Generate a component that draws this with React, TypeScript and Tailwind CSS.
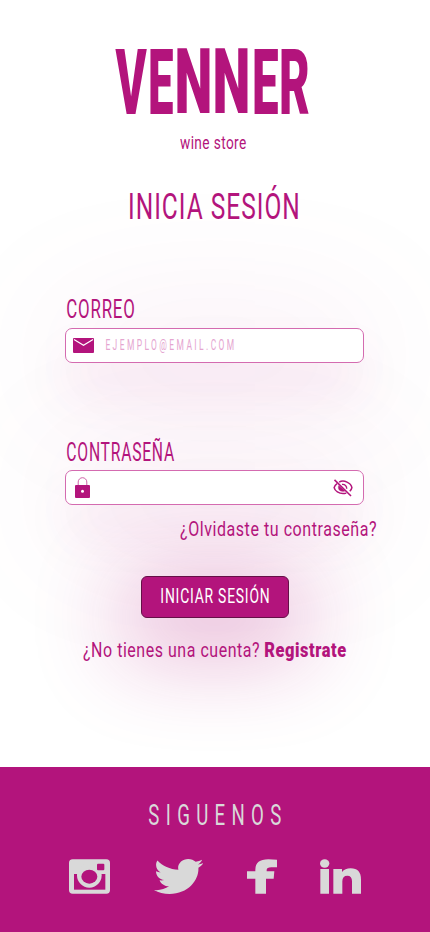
import { useLayoutEffect, useRef, useState } from "react";
import type { ReactNode } from "react";
import { FaTwitter } from "react-icons/fa";

/* Condenses a line of text so that its ink fills the width of its box. */
function Condensed({ text, className }: { text: string; className: string }) {
  const box = useRef<HTMLSpanElement>(null);
  const [fit, setFit] = useState({ scale: 1, shift: 0 });

  useLayoutEffect(() => {
    const el = box.current;
    const ctx = document.createElement("canvas").getContext("2d");
    if (!el || !ctx) return;
    const style = getComputedStyle(el);
    ctx.font = `${style.fontWeight} ${style.fontSize} ${style.fontFamily}`;
    const spacing = parseFloat(style.letterSpacing) || 0;
    const m = ctx.measureText(text);
    const ink = m.actualBoundingBoxRight + m.actualBoundingBoxLeft + spacing * (text.length - 1);
    const scale = el.clientWidth / ink;
    setFit({ scale, shift: m.actualBoundingBoxLeft * scale });
  }, [text]);

  return (
    <span ref={box} className={`block shrink-0 whitespace-nowrap leading-none ${className}`}>
      <span
        className="block w-max origin-left"
        style={{ transform: `translateX(${fit.shift}px) scaleX(${fit.scale})` }}
      >
        {text}
      </span>
    </span>
  );
}

/* The glow sits on a pseudo-element behind every control of the form. */
function Field({ children }: { children: ReactNode }) {
  return (
    <div className="relative flex h-[35px] w-[299px] items-center rounded-[7px] border border-[#d46bb0] bg-white before:absolute before:inset-0 before:-z-10 before:rounded-[7px] before:shadow-[0_28px_50px_rgba(179,20,124,0.08),0_10px_150px_10px_rgba(179,20,124,0.13)]">
      {children}
    </div>
  );
}

function Logo() {
  return (
    <h1 className="ml-[115px] mt-[37px] flex h-[92px] font-black">
      <Condensed text="V" className="mt-[2px] w-[32px] text-[90px]" />
      <Condensed text="E" className="mt-px ml-[3px] w-[23px] text-[91px]" />
      <Condensed text="N" className="mt-px ml-[4px] w-[33px] text-[90px]" />
      <Condensed text="N" className="mt-px ml-[5px] w-[33px] text-[90px]" />
      <Condensed text="E" className="mt-px ml-[6px] w-[24px] text-[91px]" />
      <Condensed text="R" className="mt-px ml-[3px] w-[28px] text-[91px]" />
    </h1>
  );
}

function MailIcon() {
  return (
    <svg className="ml-[7px] h-[15px] w-[21px]" viewBox="0 0 21 15" fill="none">
      <rect width="21" height="15" rx="1" fill="#b3147c" />
      <path d="M1 1.400 10.500 7.200 20 1.400" stroke="#fff" strokeWidth="1.200" />
    </svg>
  );
}

function LockIcon() {
  return (
    <svg className="ml-[9px] h-[21px] w-[15px]" viewBox="0 0 15 21" fill="none">
      <path d="M3.200 8.500V5a4.300 4.300 0 0 1 8.600 0v3.500" stroke="#c9519f" strokeWidth="0.900" />
      <rect y="8" width="15" height="13" rx="1" fill="#b3147c" />
      <circle cx="7.500" cy="14.200" r="1.500" fill="#fff" />
    </svg>
  );
}

function EyeOffIcon() {
  return (
    <svg className="ml-auto mr-[10px] h-[18px] w-[20px]" viewBox="0 0 20 18" fill="none" stroke="#b3147c">
      <path d="M6.200 3.200C8 2 11.400 1.900 14 3.100c2.500 1.100 4.500 3.200 4.900 5.600-.2 1.300-1 2.500-2.100 3.500M4 4.600C2.500 5.700 1.500 7.100 1.100 8.700c.8 3.400 5 5.900 8.900 5.900 1.200 0 2.300-.2 3.300-.5" strokeWidth="1.500" />
      <path d="M5.700 6.600c-1.300 3 .7 6 4.300 6 .8 0 1.500-.2 2.100-.5Z" fill="#b3147c" strokeWidth="0.300" />
      <path d="M9 5.400c2.900-.3 4.900 1.600 4.700 4.300" strokeWidth="1.400" />
      <path d="M1.500.9 18 17" strokeWidth="1.600" />
    </svg>
  );
}

function InstagramIcon() {
  return (
    <svg className="h-[35px] w-[41px]" viewBox="27 28 123 103">
      <rect x="27" y="28" width="123" height="103" rx="11" fill="#d9d9d9" />
      <path d="M42 72h94v47H42z" fill="#b3147c" />
      <circle cx="88" cy="76" r="37" fill="#d9d9d9" />
      <ellipse cx="88" cy="80" rx="24" ry="21" fill="#b3147c" />
      <rect x="111" y="41" width="22" height="20" rx="3" fill="#b3147c" />
    </svg>
  );
}

function FacebookIcon() {
  return (
    <svg className="ml-[44px] h-[35px] w-[30px]" viewBox="50 28 90 103" fill="#d9d9d9">
      <path d="M140 29v23h-17q-14 0-14 8v4h23l-2 22h-23v45H75V86H50V64h25v-5q0-31 39-31 15 0 26 1Z" />
    </svg>
  );
}

function LinkedinIcon() {
  return (
    <svg className="ml-[43px] h-[35px] w-[41px]" viewBox="270 28 123 103" fill="#d9d9d9">
      <ellipse cx="284" cy="40.500" rx="14" ry="12.500" />
      <path d="M271 57h26v74h-26zM310 57h26v9q9-11 26-11 31 0 31 34v42h-27V94q0-17-14-17-15 0-15 17v37h-27z" />
    </svg>
  );
}

export default function App() {
  return (
    <div className="flex h-[932px] w-[430px] flex-col overflow-hidden bg-white font-['Roboto',sans-serif] text-[#b3147c]">
      <main className="isolate flex h-[767px] flex-col overflow-hidden">
        <Logo />
        <Condensed text="wine store" className="ml-[180px] mt-[6px] w-[66px] text-[17.5px] tracking-[0.5px]" />
        <h2 className="mt-[36.5px]">
          <Condensed text="INICIA SESIÓN" className="ml-[130px] w-[168px] text-[36px] tracking-[1.5px]" />
        </h2>

        <label className="ml-[65px] mt-[72px] flex flex-col">
          <Condensed text="CORREO" className="ml-[2px] w-[66.5px] text-[25px] tracking-[1.2px]" />
          <div className="mt-[6px]">
            <Field>
              <MailIcon />
              <Condensed text="EJEMPLO@EMAIL.COM" className="-mt-[2px] ml-[11.5px] w-[128px] text-[14px] tracking-[4px] text-[#e5a5d0]" />
            </Field>
          </div>
        </label>

        <label className="ml-[65px] mt-[77px] flex flex-col">
          <Condensed text="CONTRASEÑA" className="ml-[2px] w-[107px] text-[25px] tracking-[1.2px]" />
          <div className="mt-[5px]">
            <Field>
              <LockIcon />
              <EyeOffIcon />
            </Field>
          </div>
        </label>

        <a className="ml-[180px] mt-[14px]">
          <Condensed text="¿Olvidaste tu contraseña?" className="w-[195.5px] text-[20.5px] tracking-[0.7px]" />
        </a>

        <button className="relative ml-[140.5px] mt-[36.5px] flex h-[42px] w-[148px] shrink-0 items-start rounded-[6px] border border-[#651047] bg-[#b3147c] pl-[19px] pt-[9px] text-left text-white before:absolute before:inset-0 before:-z-10 before:rounded-[6px] before:shadow-[0_20px_90px_20px_rgba(179,20,124,0.30)]">
          <Condensed text="INICIAR SESIÓN" className="w-[108px] text-[21px] tracking-[1.2px]" />
        </button>

        <p className="ml-[83px] mt-[21.5px] flex">
          <Condensed text="¿No tienes una cuenta?" className="w-[176px] text-[20.5px] tracking-[0.7px]" />
          <Condensed text="Registrate" className="ml-[6px] w-[81px] text-[20.5px] font-black tracking-[0.7px]" />
        </p>
      </main>

      <footer className="flex h-[165px] flex-col bg-[#b3147c] text-[#d9d9d9]">
        <Condensed text="SIGUENOS" className="ml-[149px] mt-[34px] w-[131.5px] text-[29.5px] tracking-[10px]" />
        <div className="ml-[69px] mt-[28.5px] flex">
          <InstagramIcon />
          <FaTwitter className="ml-[43.5px] h-[35px] w-[49.5px]" viewBox="0 48 512 416" preserveAspectRatio="none" />
          <FacebookIcon />
          <LinkedinIcon />
        </div>
      </footer>
    </div>
  );
}
